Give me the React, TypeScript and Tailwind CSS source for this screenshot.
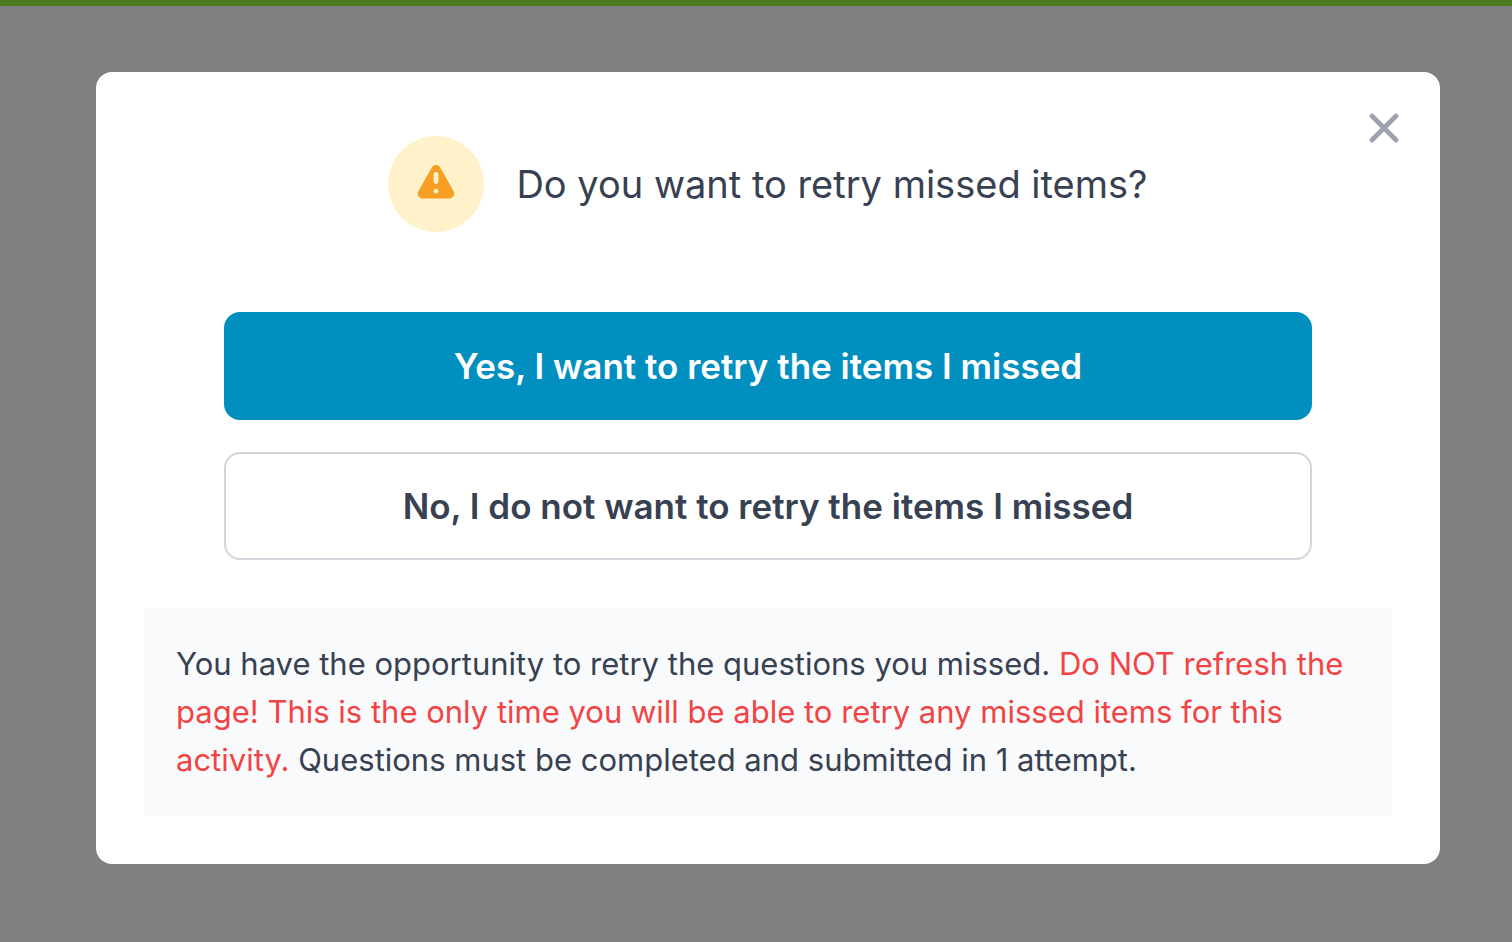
import React from "react";

function WarningIcon() {
  return (
    <svg viewBox="0 0 20 20" className="size-12" fill="currentColor" aria-hidden="true">
      <path
        fillRule="evenodd"
        clipRule="evenodd"
        d="M8.257 3.099c.765-1.36 2.722-1.36 3.486 0l5.58 9.92c.75 1.334-.213 2.98-1.742 2.98H4.42c-1.53 0-2.493-1.646-1.743-2.98l5.58-9.92zM11 13a1 1 0 11-2 0 1 1 0 012 0zm-1-8a1 1 0 00-1 1v3a1 1 0 002 0V6a1 1 0 00-1-1z"
      />
    </svg>
  );
}

function CloseIcon() {
  return (
    <svg viewBox="0 0 20 20" className="size-12" fill="none" stroke="currentColor" strokeWidth="2" strokeLinecap="round" aria-hidden="true">
      <path d="M5 5l10 10M15 5L5 15" />
    </svg>
  );
}

export default function App() {
  return (
    <div className="min-h-screen border-t-6 border-[#4d7c1f] bg-[#808080] pt-[66px] pr-18 pb-18 pl-24 font-['Inter','Liberation_Sans',sans-serif] text-[#374151]">
      <main role="dialog" aria-labelledby="title" className="relative rounded-2xl bg-white px-12 pt-16 pb-12">
        <button type="button" aria-label="Close" className="absolute top-8 right-8 text-[#9ca3af]">
          <CloseIcon />
        </button>
        <header className="flex items-center justify-center gap-8">
          <span className="flex size-24 shrink-0 items-center justify-center rounded-full bg-[#fff2cb] text-[#f79f23]">
            <WarningIcon />
          </span>
          <h1 id="title" className="text-[38px] leading-12">Do you want to retry missed items?</h1>
        </header>
        <div className="mt-20 flex flex-col gap-8 px-20 text-[35px] leading-12 font-semibold">
          <button type="button" className="rounded-2xl border-2 border-[#008fbf] bg-[#008fbf] py-7 text-white">
            Yes, I want to retry the items I missed
          </button>
          <button type="button" className="rounded-2xl border-2 border-[#d1d5db] bg-white py-7">
            No, I do not want to retry the items I missed
          </button>
        </div>
        <p className="mt-12 bg-[#f9fafc] p-8 text-[31px] leading-12">
          You have the opportunity to retry the questions you missed.{" "}
          <span className="text-[#f24444]">
            Do NOT refresh the page! This is the only time you will be able to retry any missed items for this activity.
          </span>{" "}
          Questions must be completed and submitted in 1 attempt.
        </p>
      </main>
    </div>
  );
}
